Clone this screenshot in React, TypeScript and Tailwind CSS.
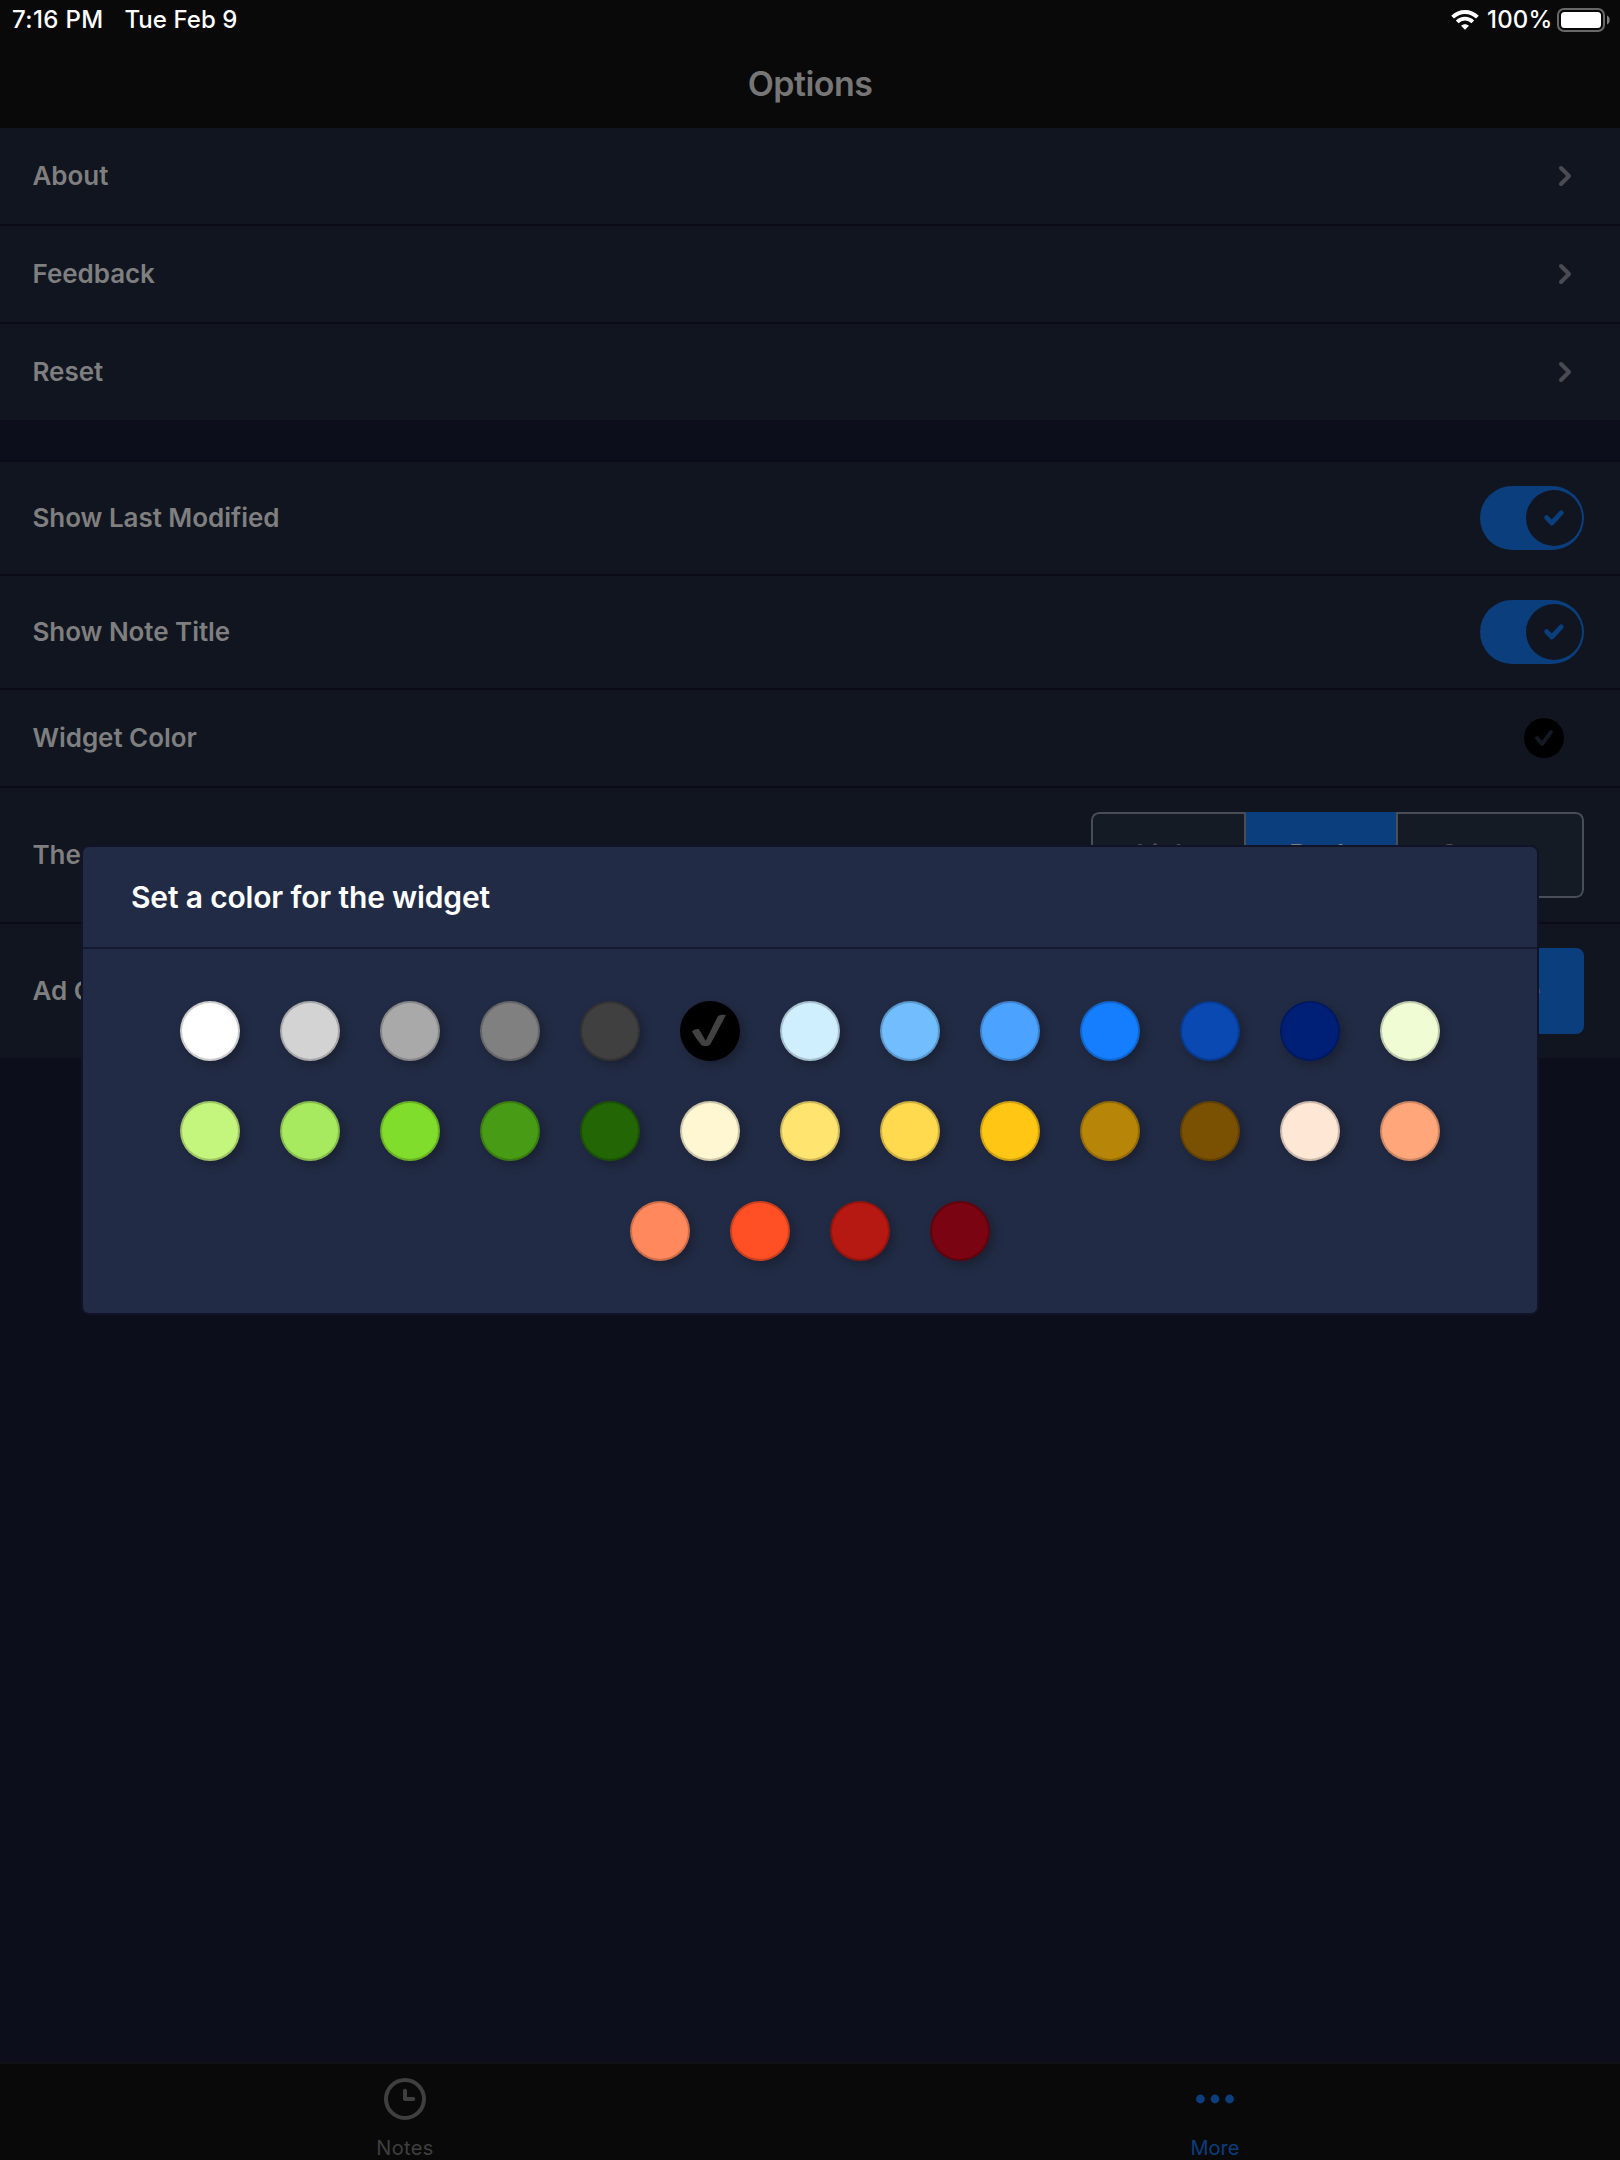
import type { ReactNode } from "react";

const SWATCHES = [
  "#ffffff", "#d3d3d3", "#a9a9a9", "#808080", "#404040", "#000000", "#cfefff", "#71bdfe", "#4ca3ff", "#147efe", "#0a48b2", "#002078", "#effcd4",
  "#c4f57d", "#a7ea5f", "#81dd2c", "#489b14", "#226606", "#fff7d1", "#ffe470", "#ffd94e", "#ffc714", "#b78508", "#7a5102", "#ffe7d5", "#ffa77a",
  "#ff885c", "#ff4f25", "#b61912", "#7a0412",
];

function Row({ label, height, last, children }: { label: string; height: string; last?: boolean; children: ReactNode }) {
  return (
    <div className={`flex items-center justify-between pl-[32.5px] ${height} ${last ? "" : "border-b-2 border-[#0a0b17]"}`}>
      <span className="pb-0.5 text-[26px] font-semibold tracking-[-0.05px] text-[#7f7f7f]">{label}</span>
      {children}
    </div>
  );
}

function Chevron() {
  return (
    <svg className="mr-[46px]" width="20" height="24" viewBox="0 0 20 24" fill="none" stroke="#484b54" strokeWidth="4" strokeLinecap="round" strokeLinejoin="round">
      <path d="M7 4l8 8-8 8" />
    </svg>
  );
}

function Toggle() {
  return (
    <div className="mr-9 flex h-16 w-[104px] items-center justify-end rounded-full bg-[#0a3e7d] pr-0.5">
      <div className="flex size-14 items-center justify-center rounded-full bg-[#101520]">
        <svg width="24" height="24" viewBox="0 0 24 24" fill="none" stroke="#0a3e7d" strokeWidth="4.8" strokeLinecap="round" strokeLinejoin="round">
          <path d="M4.600 11.600L9.800 17L19.200 6.800" />
        </svg>
      </div>
    </div>
  );
}

function StatusBar() {
  return (
    <div className="flex h-10 items-start justify-between pl-3 pr-2.5 pt-1 text-[24px] font-medium leading-8 text-white">
      <div className="flex gap-[21px]">
        <span className="tracking-[0.35px]">7:16 PM</span>
        <span className="tracking-[0.05px]">Tue Feb 9</span>
      </div>
      <div className="flex">
        <svg className="mr-2 mt-[5px]" width="28" height="22" viewBox="0 0 28 22" fill="none" stroke="#fff" strokeWidth="3.9">
          <path d="M1.6 8.2C8.6 1.2 19.4 1.2 26.4 8.2" />
          <path d="M6.2 12.8C10.6 8.6 17.4 8.6 21.8 12.8" />
          <path d="M14 20.8L10 16.8C12.2 14.6 15.8 14.6 18 16.8Z" fill="#fff" stroke="none" />
        </svg>
        <span className="w-[70px] tracking-[0.2px]">100%</span>
        <svg className="mt-1" width="53" height="24" viewBox="0 0 53 24">
          <rect x="1" y="1" width="46" height="22" rx="6" fill="none" stroke="#686868" strokeWidth="2" />
          <rect x="4" y="4" width="40" height="16" rx="3.5" fill="#fff" />
          <path d="M50 7.5c3.6 1.5 3.6 7.500 0 9z" fill="#7a7a7a" />
        </svg>
      </div>
    </div>
  );
}

function WidgetDialog() {
  return (
    <div className="h-[470px] w-[1458px] rounded-[8px] border-2 border-[#111427] bg-[#111427]">
      <div className="h-full rounded-[6px] bg-[#222b45]">
        <div className="flex h-[102px] items-center border-b-2 border-[#151a30] pl-12">
          <h2 className="text-[30px] font-semibold tracking-[-0.17px] text-white">Set a color for the widget</h2>
        </div>
        <div className="flex flex-wrap justify-center px-[60px] pt-8">
          {SWATCHES.map((color) => (
            <div
              key={color}
              className="m-5 flex size-[60px] items-center justify-center rounded-full border-2 border-black/20 shadow-[4px_4px_10px_rgba(0,0,0,0.25)]"
              style={{ backgroundColor: color }}
            >
              {color === "#000000" && (
                <svg width="40" height="40" viewBox="0 0 40 40" fill="#424242">
                  <path d="M2 20.500C3.500 18.600 6.500 17.700 9 18.200L15.700 29.800L27.700 5.500C28.700 3.900 33 3.400 36 4L20.500 33C19 35.600 12.500 35.600 11 33.400Q6 28 2 20.500Z" />
                </svg>
              )}
            </div>
          ))}
        </div>
      </div>
    </div>
  );
}

export default function App() {
  return (
    <div className="relative flex h-[2160px] w-[1620px] flex-col overflow-hidden bg-[#0d0e1b] font-['Inter',sans-serif]">
      <header className="h-32 bg-[#090909]">
        <StatusBar />
        <h1 className="pt-[24px] text-center text-[34px] font-semibold leading-10 tracking-[-0.55px] text-[#767676]">Options</h1>
      </header>

      <section className="bg-[#111520]">
        <Row label="About" height="h-[98px]"><Chevron /></Row>
        <Row label="Feedback" height="h-[98px]"><Chevron /></Row>
        <Row label="Reset" height="h-24" last><Chevron /></Row>
      </section>

      <section className="mt-10 border-t-2 border-[#0a0b17] bg-[#111520]">
        <Row label="Show Last Modified" height="h-[114px]"><Toggle /></Row>
        <Row label="Show Note Title" height="h-[114px]"><Toggle /></Row>
        <Row label="Widget Color" height="h-[98px]">
          <div className="mr-14 flex size-10 items-center justify-center rounded-full bg-black">
            <svg width="24" height="24" viewBox="0 0 24 24" fill="none" stroke="#141924" strokeWidth="3.8" strokeLinecap="round" strokeLinejoin="round">
              <path d="M5 12L10 18L19 6" />
            </svg>
          </div>
        </Row>
        <Row label="Theme" height="h-[136px]">
          <div className="mr-9 flex h-[86px] w-[493px] overflow-hidden rounded-[8px] text-[27px] font-semibold text-[#484d56]">
            <div className="flex w-[153px] items-center justify-center rounded-l-[8px] border-2 border-r-0 border-[#484d56] bg-[#151b25] tracking-[-0.2px]">Light</div>
            <div className="flex w-[154px] items-center justify-center border-x-2 border-[#484d56] bg-[#0a3e7d] tracking-[0.5px] text-[#7f7f7f]">Dark</div>
            <div className="flex flex-1 items-center justify-center rounded-r-[8px] border-2 border-l-0 border-[#484d56] bg-[#151b25] tracking-[0.2px]">System</div>
          </div>
        </Row>
        <Row label="Ad Consent" height="h-[134px]" last>
          <div className="mr-9 flex h-[86px] items-center rounded-[8px] bg-[#0a3e7d] pb-0.5 pl-10 pr-[43.5px] text-[26px] font-semibold text-[#7f7f7f]">Change</div>
        </Row>
      </section>

      <nav className="mt-auto grid h-[97px] grid-cols-2 border-t border-[#111] bg-[#090909] text-[20px] leading-6">
        <div className="flex flex-col items-center pt-[14px] text-[#3f3f3f]">
          <svg width="42" height="42" viewBox="0 0 42 42" fill="none" stroke="currentColor" strokeWidth="4">
            <circle cx="21" cy="21" r="19" />
            <path d="M21 12.700V21H29.300" strokeLinecap="round" strokeLinejoin="round" />
          </svg>
          <span className="mt-4 tracking-[0.4px]">Notes</span>
        </div>
        <div className="flex flex-col items-center pt-[14px] text-[#0a3e7d]">
          <svg width="42" height="42" viewBox="0 0 42 42" fill="currentColor">
            <circle cx="6.400" cy="21" r="4.400" />
            <circle cx="21" cy="21" r="4.400" />
            <circle cx="35.600" cy="21" r="4.400" />
          </svg>
          <span className="mt-4">More</span>
        </div>
      </nav>

      <div className="absolute inset-0 flex items-center justify-center">
        <WidgetDialog />
      </div>
    </div>
  );
}
